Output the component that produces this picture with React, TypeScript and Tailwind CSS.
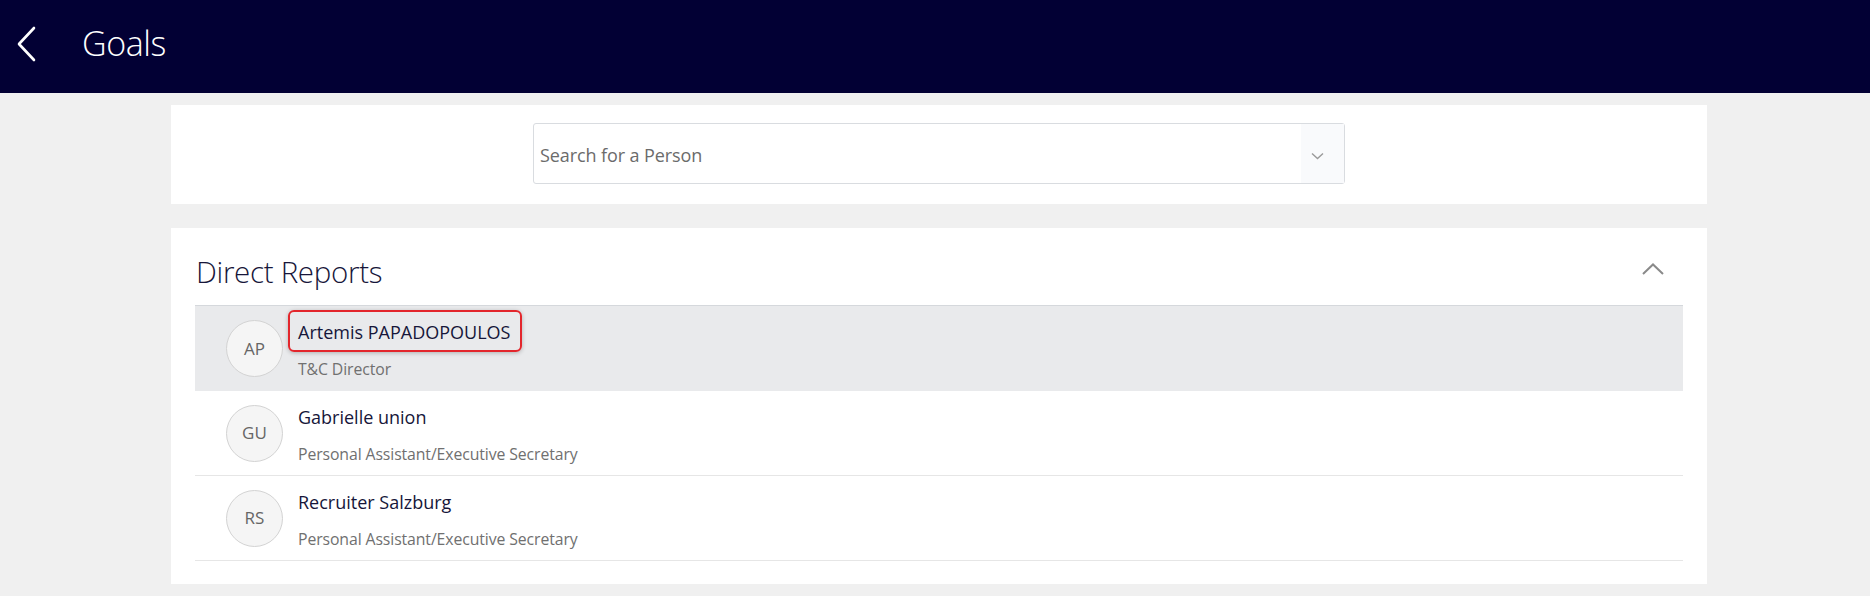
const people = [
  { initials: 'AP', name: 'Artemis PAPADOPOULOS', title: 'T&C Director', active: true },
  { initials: 'GU', name: 'Gabrielle union', title: 'Personal Assistant/Executive Secretary', active: false },
  { initials: 'RS', name: 'Recruiter Salzburg', title: 'Personal Assistant/Executive Secretary', active: false },
];

const ChevronLeft = () => (
  <svg width="20" height="36" viewBox="0 0 20 36" fill="none">
    <path d="M18 2 L3 18 L18 34" stroke="white" strokeWidth="2.6" strokeLinecap="round" strokeLinejoin="round" />
  </svg>
);

export default function App() {
  return (
    <div className="min-h-screen bg-[#f0f0f0] font-['Open_Sans',sans-serif]">
      {/* header */}
      <div className="h-[93px] bg-[#020034] flex items-center">
        <button className="ml-[16px] mt-[-6px]">
          <ChevronLeft />
        </button>
        <h1 className="ml-[46px] mt-[-6px] text-[34px] font-light text-white tracking-[-0.4px]">Goals</h1>
      </div>

      {/* search card */}
      <div className="ml-[171px] w-[1536px] mt-[12px] h-[99px] bg-white flex justify-center pt-[18px]">
        <div className="w-[812px] h-[61px] border border-[#d9dce0] rounded-[3px] flex">
          <div className="flex-1 flex items-center pl-[6px] pt-[3px] text-[18px] text-[#6b6b6b] tracking-[-0.1px]">
            Search for a Person
          </div>
          <div className="w-[43px] bg-[#f9fafc] flex items-center justify-center pr-[10px] pt-[4px]">
            <svg width="13" height="8" viewBox="0 0 13 8" fill="none">
              <path d="M1 1.5 L6.5 6.5 L12 1.5" stroke="#9a9a9a" strokeWidth="1.4" />
            </svg>
          </div>
        </div>
      </div>

      {/* direct reports card */}
      <div className="ml-[171px] w-[1536px] mt-[24px] bg-white px-[24px] pt-[24px] pb-[23px]">
        <div className="h-[53px] flex items-start justify-between">
          <h2 className="ml-[1px] text-[29.5px] font-light leading-[40px] text-[#17163a] tracking-[-0.3px]">Direct Reports</h2>
          <svg className="mt-[11px] mr-[19px]" width="22" height="12" viewBox="0 0 22 12" fill="none">
            <path d="M1 11 L11 1.5 L21 11" stroke="#8a8a8a" strokeWidth="2" />
          </svg>
        </div>
        <div className="border-t border-[#d5d8dc]">
          {people.map((p) => (
            <div
              key={p.initials}
              className={
                p.active
                  ? 'h-[85px] flex items-center bg-[#e9eaec]'
                  : 'h-[85px] flex items-center border-b border-[#e6e6e6]'
              }
            >
              <div className="ml-[31px] w-[57px] h-[57px] rounded-full border border-[#d3d3d3] bg-[#f5f5f5] flex items-center justify-center text-[17px] text-[#666]">
                {p.initials}
              </div>
              <div className="ml-[15px] h-full pt-[14px]">
                <div className="relative inline-block text-[18px] leading-[24px] text-[#16163a]">
                  {p.name}
                  {p.active && (
                    <span className="absolute -left-[10px] -right-[12px] -top-[10px] -bottom-[8px] border-2 border-[#e3262c] rounded-[6px] shadow-[0_1px_4px_rgba(0,0,0,0.25)]" />
                  )}
                </div>
                <div className="mt-[14px] text-[15.8px] leading-[20px] text-[#707070] tracking-[-0.1px]">{p.title}</div>
              </div>
            </div>
          ))}
        </div>
      </div>
    </div>
  );
}
